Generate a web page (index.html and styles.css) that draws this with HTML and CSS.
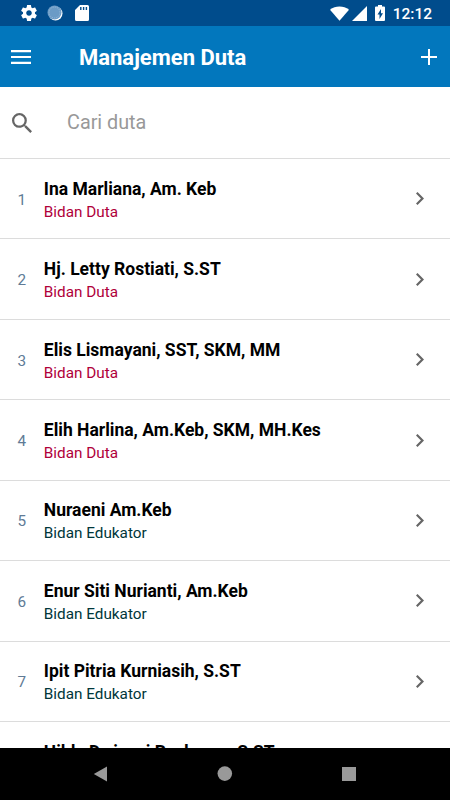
FILE: index.html
```html
<!DOCTYPE html>
<html lang="id">
<head>
    <meta charset="UTF-8">
    <meta name="viewport" content="width=device-width, initial-scale=1.0">
    <title>Manajemen Duta</title>
    <link rel="stylesheet" href="styles.css">
</head>
<body>
    <div class="status-bar">
        <svg class="icon-gear" viewBox="2 2 20 20"><path d="M19.430 12.980c.04-.32.07-.64.07-.98s-.03-.66-.07-.98l2.110-1.650c.19-.15.24-.42.12-.64l-2-3.460c-.12-.22-.39-.3-.61-.22l-2.490 1c-.52-.4-1.080-.73-1.690-.98l-.38-2.650C14.460 2.180 14.250 2 14 2h-4c-.25 0-.46.18-.49.42l-.38 2.650c-.61.25-1.170.59-1.690.98l-2.490-1c-.23-.09-.49 0-.61.22l-2 3.460c-.13.22-.07.49.12.64l2.110 1.650c-.04.32-.07.65-.07.98s.03.66.07.98l-2.110 1.650c-.19.15-.24.42-.12.64l2 3.460c.12.22.39.3.61.22l2.490-1c.52.4 1.080.73 1.690.98l.38 2.650c.03.24.24.42.49.42h4c.25 0 .46-.18.49-.42l.38-2.650c.61-.25 1.170-.59 1.690-.98l2.490 1c.23.09.49 0 .61-.22l2-3.460c.12-.22.07-.49-.12-.64l-2.110-1.650zM12 15.500c-1.930 0-3.500-1.570-3.500-3.500s1.570-3.500 3.500-3.500 3.500 1.570 3.500 3.500-1.570 3.500-3.500 3.500z"/></svg>
        <svg class="icon-sync" viewBox="0 0 16 16">
            <circle cx="8.500" cy="8.500" r="7"/>
            <circle class="disc" cx="7.500" cy="7.500" r="7"/>
            <circle class="ring" cx="7.500" cy="7.500" r="5.500"/>
        </svg>
        <svg class="icon-card" viewBox="0 0 14 16"><path d="M5 0h7.500a1.500 1.500 0 0 1 1.500 1.500v13a1.500 1.500 0 0 1-1.500 1.500h-11A1.500 1.500 0 0 1 0 14.500V5z"/><path class="pins" d="M5.800 2v3M8.600 2v3M11.400 2v3"/></svg>
        <div class="status-right">
            <svg class="icon-wifi" viewBox="0 0 20 15"><path d="M10 15 0 3.500Q4.500 0 10 0t10 3.500z"/></svg>
            <svg class="icon-signal" viewBox="0 0 15 15"><path d="M15 0v15H0z"/></svg>
            <svg class="icon-battery" viewBox="0 0 10 16"><path d="M3 0h4v1.500h2a1 1 0 0 1 1 1V15a1 1 0 0 1-1 1H1a1 1 0 0 1-1-1V2.500a1 1 0 0 1 1-1h2z"/><path class="bolt" d="M6 4 2.500 9.500h2V14L8 8.200H6z"/></svg>
            <span class="clock">12:12</span>
        </div>
    </div>

    <div class="header">
        <svg class="icon-menu" viewBox="0 0 20 14"><path d="M0 1.200h20M0 7h20M0 12.800h20"/></svg>
        <h1>Manajemen Duta</h1>
        <svg class="icon-plus" viewBox="0 0 16 16"><path d="M8 0v16M0 8h16"/></svg>
    </div>

    <div class="search">
        <svg class="icon-search" viewBox="3 3 17.500 17.500"><path d="M15.500 14h-.79l-.28-.27A6.470 6.470 0 0 0 16 9.500 6.500 6.500 0 1 0 9.500 16c1.610 0 3.090-.59 4.230-1.570l.27.28v.79l5 4.990L20.490 19l-4.990-5zm-6 0C7.010 14 5 11.990 5 9.500S7.010 5 9.500 5 14 7.010 14 9.500 11.990 14 9.500 14z"/></svg>
        <input type="text" placeholder="Cari duta">
    </div>

    <div class="list" id="list"></div>

    <div class="nav-bar">
        <svg viewBox="0 0 16 16"><path d="M14 .5v15L.800 8z"/></svg>
        <svg viewBox="0 0 16 16"><circle cx="7.800" cy="7.600" r="7.300"/></svg>
        <svg viewBox="0 0 16 16"><path d="M1 1h14v14H1z"/></svg>
    </div>

    <script>
        const duta = [
            ["Ina Marliana, Am. Keb", "Bidan Duta"],
            ["Hj. Letty Rostiati, S.ST", "Bidan Duta"],
            ["Elis Lismayani, SST, SKM, MM", "Bidan Duta"],
            ["Elih Harlina, Am.Keb, SKM, MH.Kes", "Bidan Duta"],
            ["Nuraeni Am.Keb", "Bidan Edukator"],
            ["Enur Siti Nurianti, Am.Keb", "Bidan Edukator"],
            ["Ipit Pitria Kurniasih, S.ST", "Bidan Edukator"],
            ["Hilda Dwiyani Rachman, S.ST"]
        ];

        // the last row is still half under the navigation bar
        document.getElementById('list').innerHTML = duta.map(([name, role], i) => `
            <div class="row">
                <span class="number">${role ? i + 1 : ""}</span>
                <div class="person">
                    <div class="name">${name}</div>
                    <div class="role ${role === "Bidan Duta" ? "duta" : "edukator"}">${role || ""}</div>
                </div>
                <svg class="chevron" viewBox="8.590 6 7.410 12"><path d="M10 6L8.590 7.410 13.170 12l-4.580 4.590L10 18l6-6z"/></svg>
            </div>
        `).join('');
    </script>
</body>
</html>
```
FILE: styles.css
```css
* {
    box-sizing: border-box;
}
body {
    font-family: Roboto, sans-serif;
    display: flex;
    flex-direction: column;
    height: 100vh;
    margin: 0;
    background: #fff;
    overflow: hidden;
}
svg {
    display: block;
    flex: none;
}
.status-bar {
    flex: none;
    display: flex;
    align-items: center;
    height: 26px;
    padding: 0 18px 0 20.5px;
    background: #004c8c;
    fill: #fff;
}
.icon-gear {
    width: 16px;
    height: 16px;
}
.icon-sync {
    width: 16px;
    height: 16px;
    margin-left: 10px;
}
.icon-sync .disc {
    fill: #6b9bc6;
}
.icon-sync .ring {
    fill: none;
    stroke: #9bbcdc;
    stroke-dasharray: 1 1;
}
.icon-card {
    width: 14px;
    height: 16px;
    margin-left: 12px;
}
.icon-card .pins {
    stroke: #004c8c;
    stroke-width: 1.4;
}
.status-right {
    display: flex;
    align-items: center;
    margin-left: auto;
}
.icon-wifi {
    width: 19px;
    height: 15px;
}
.icon-signal {
    width: 15px;
    height: 15px;
    margin-left: 3px;
}
.icon-battery {
    width: 10px;
    height: 16px;
    margin-left: 8px;
}
.icon-battery .bolt {
    fill: #004c8c;
}
.clock {
    margin-left: 8px;
    padding-top: 2px;
    color: #fff;
    font-size: 15.5px;
    font-weight: 500;
    line-height: 20px;
}
.header {
    flex: none;
    display: flex;
    align-items: center;
    height: 61px;
    padding: 0 13px 0 10.5px;
    background: #0277bd;
}
.icon-menu {
    width: 20px;
    height: 14px;
    stroke: #fff;
    stroke-width: 2.2;
}
h1 {
    flex: 1;
    margin: 2px 0 0 48.5px;
    color: #fff;
    font-size: 22px;
    font-weight: bold;
}
.icon-plus {
    width: 16px;
    height: 16px;
    stroke: #fff;
    stroke-width: 2;
}
.search {
    flex: none;
    display: flex;
    align-items: center;
    height: 72px;
    padding: 0 12px;
    border-bottom: 1px solid #dcdcdc;
}
.icon-search {
    width: 20px;
    height: 20px;
    fill: #666;
}
input {
    flex: 1;
    min-width: 0;
    margin: 0 0 1px 35px;
    padding: 0;
    border: 0;
    outline: none;
    background: none;
    font-family: inherit;
    font-size: 19.8px;
}
input::placeholder {
    color: #999;
}
.list {
    flex: 1;
    min-height: 0;
    overflow: hidden;
}
.row {
    display: flex;
    align-items: center;
    height: 80.45px;
    padding: 0 26.5px 0 0;
    border-bottom: 1px solid #dcdcdc;
}
.number {
    width: 43.8px;
    padding-top: 2px;
    color: #607b96;
    font-size: 15.3px;
    text-align: center;
}
.person {
    flex: 1;
    padding-top: 3px;
}
.name {
    color: #000;
    font-size: 17.5px;
    font-weight: bold;
    line-height: 23px;
}
.role {
    height: 22px;
    font-size: 15.3px;
    line-height: 22px;
}
.role.duta {
    color: #b0003a;
}
.role.edukator {
    color: #00363a;
}
.chevron {
    width: 8px;
    height: 13px;
    fill: #666;
}
.nav-bar {
    flex: none;
    display: flex;
    justify-content: center;
    align-items: center;
    gap: 108px;
    height: 52px;
    background: #000;
    fill: #999;
}
.nav-bar svg {
    width: 16px;
    height: 16px;
}
```
